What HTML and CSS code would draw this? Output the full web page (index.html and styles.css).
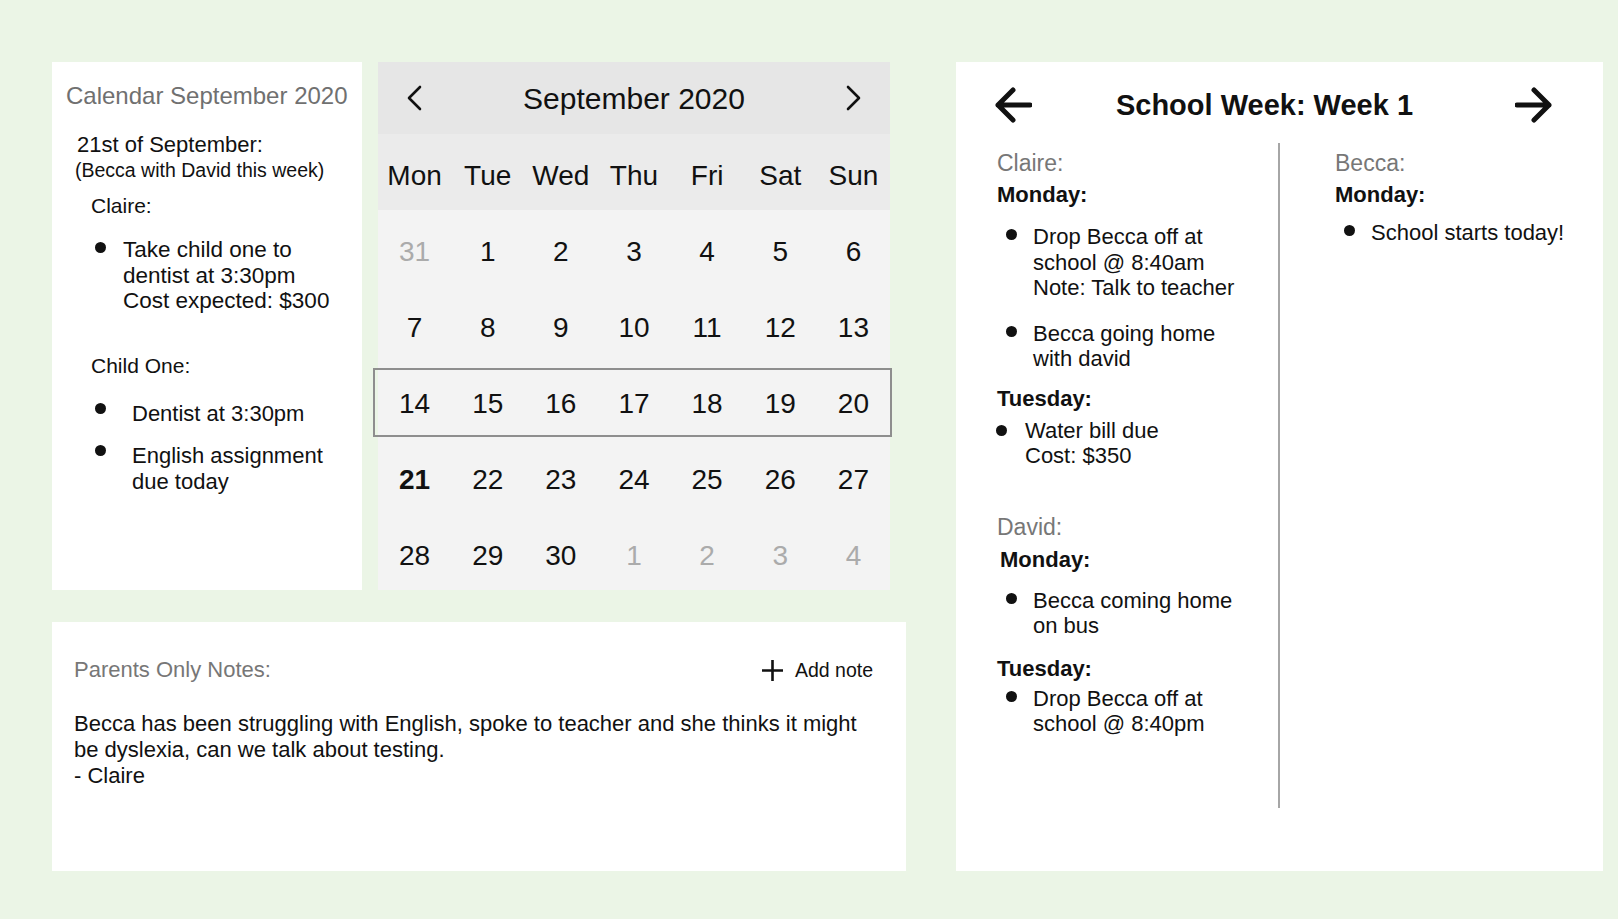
FILE: index.html
```html
<!DOCTYPE html>
<html lang="en">
<head>
    <meta charset="UTF-8">
    <meta name="viewport" content="width=device-width, initial-scale=1.0">
    <title>Family Calendar</title>
    <link rel="stylesheet" href="styles.css">
</head>
<body>
    <main class="page">
        <section class="left-col">
            <div class="top-row">
                <!-- Selected day summary -->
                <aside class="day-card">
                    <h1 class="day-title">Calendar September 2020</h1>
                    <h2 class="day-date">21st of September:</h2>
                    <p class="day-note">(Becca with David this week)</p>

                    <h3 class="person">Claire:</h3>
                    <ul class="dots">
                        <li>Take child one to<br>dentist at 3:30pm<br>Cost expected: $300</li>
                    </ul>

                    <h3 class="person person-gap">Child One:</h3>
                    <ul class="dots dots-wide">
                        <li>Dentist at 3:30pm</li>
                        <li>English assignment<br>due today</li>
                    </ul>
                </aside>

                <!-- Month view -->
                <div class="calendar">
                    <div class="cal-head">
                        <span class="cal-nav">
                            <svg width="16" height="26" viewBox="0 0 16 26"><polyline points="13,2 2,13 13,24" fill="none" stroke="#111" stroke-width="2.6" stroke-linecap="round" stroke-linejoin="round"/></svg>
                        </span>
                        <span class="cal-month">September 2020</span>
                        <span class="cal-nav">
                            <svg width="16" height="26" viewBox="0 0 16 26"><polyline points="3,2 14,13 3,24" fill="none" stroke="#111" stroke-width="2.6" stroke-linecap="round" stroke-linejoin="round"/></svg>
                        </span>
                    </div>
                    <div class="cal-days">
                        <span>Mon</span><span>Tue</span><span>Wed</span><span>Thu</span><span>Fri</span><span>Sat</span><span>Sun</span>
                    </div>
                    <div class="cal-week">
                        <span class="muted">31</span><span>1</span><span>2</span><span>3</span><span>4</span><span>5</span><span>6</span>
                    </div>
                    <div class="cal-week">
                        <span>7</span><span>8</span><span>9</span><span>10</span><span>11</span><span>12</span><span>13</span>
                    </div>
                    <div class="cal-week current">
                        <span>14</span><span>15</span><span>16</span><span>17</span><span>18</span><span>19</span><span>20</span>
                    </div>
                    <div class="cal-week">
                        <span class="today">21</span><span>22</span><span>23</span><span>24</span><span>25</span><span>26</span><span>27</span>
                    </div>
                    <div class="cal-week">
                        <span>28</span><span>29</span><span>30</span><span class="muted">1</span><span class="muted">2</span><span class="muted">3</span><span class="muted">4</span>
                    </div>
                </div>
            </div>

            <!-- Notes -->
            <section class="notes-card">
                <div class="notes-head">
                    <span class="notes-label">Parents Only Notes:</span>
                    <span class="add-note">
                        <svg width="23" height="23" viewBox="0 0 23 23"><path d="M11.5 1v21M1 11.5h21" stroke="#111" stroke-width="2.6"/></svg>
                        Add note
                    </span>
                </div>
                <p class="notes-body">Becca has been struggling with English, spoke to teacher and she thinks it might be dyslexia, can we talk about testing.<br>- Claire</p>
            </section>
        </section>

        <!-- Week view -->
        <section class="week-card">
            <div class="week-head">
                <svg width="38" height="38" viewBox="0 0 38 38"><path d="M36 19H4M19 4L4 19l15 15" fill="none" stroke="#111" stroke-width="5" stroke-linecap="round" stroke-linejoin="round"/></svg>
                <h2 class="week-title">School Week: Week 1</h2>
                <svg width="38" height="38" viewBox="0 0 38 38"><path d="M2 19h32M19 4l15 15-15 15" fill="none" stroke="#111" stroke-width="5" stroke-linecap="round" stroke-linejoin="round"/></svg>
            </div>

            <div class="week-cols">
                <div class="week-col col-left">
                    <h3 class="who">Claire:</h3>
                    <h4 class="day">Monday:</h4>
                    <ul class="tasks">
                        <li>Drop Becca off at<br>school @ 8:40am<br>Note: Talk to teacher</li>
                        <li>Becca going home<br>with david</li>
                    </ul>
                    <h4 class="day day-tue">Tuesday:</h4>
                    <ul class="tasks tasks-tight">
                        <li>Water bill due<br>Cost: $350</li>
                    </ul>

                    <h3 class="who who-gap">David:</h3>
                    <h4 class="day day-shift">Monday:</h4>
                    <ul class="tasks tasks-david">
                        <li>Becca coming home<br>on bus</li>
                    </ul>
                    <h4 class="day day-tue2">Tuesday:</h4>
                    <ul class="tasks tasks-last">
                        <li>Drop Becca off at<br>school @ 8:40pm</li>
                    </ul>
                </div>

                <div class="week-col col-right">
                    <h3 class="who">Becca:</h3>
                    <h4 class="day">Monday:</h4>
                    <ul class="tasks tasks-becca">
                        <li>School starts today!</li>
                    </ul>
                </div>
            </div>
        </section>
    </main>
</body>
</html>
```

FILE: styles.css
```css
/* Main Styles */
body {
    margin: 0;
    background-color: #ebf5e6;
    color: #111;
    font-family: "Liberation Sans", Arial, Helvetica, sans-serif;
}
h1, h2, h3, h4, p, ul {
    margin: 0;
    font-weight: normal;
}
.page {
    display: flex;
    align-items: flex-start;
    gap: 50px;
    padding: 62px 0 0 52px;
}
.left-col {
    display: flex;
    flex-direction: column;
    gap: 32px;
    width: 854px;
}
.top-row {
    display: flex;
    gap: 16px;
}

/* Day card */
.day-card {
    width: 310px;
    height: 528px;
    box-sizing: border-box;
    padding-top: 20px;
    background-color: #fff;
}
.day-title {
    margin-left: 14px;
    font-size: 24px;
    line-height: 28px;
    color: #707070;
}
.day-date {
    margin: 22px 0 0 25px;
    font-size: 22px;
    line-height: 26px;
}
.day-note {
    margin-left: 23px;
    font-size: 19.5px;
    line-height: 24px;
}
.person {
    margin: 11px 0 0 39px;
    font-size: 21px;
    line-height: 26px;
}
.person-gap {
    margin-top: 39px;
}
.dots {
    list-style: none;
    margin-top: 18px;
    padding-left: 71px;
    font-size: 22.5px;
    line-height: 25.5px;
}
.dots li {
    position: relative;
}
.dots li::before {
    content: "";
    position: absolute;
    left: -28px;
    top: 5px;
    width: 11px;
    height: 11px;
    border-radius: 50%;
    background-color: #111;
}
.dots-wide {
    margin-top: 22px;
    padding-left: 80px;
    font-size: 22px;
}
.dots-wide li::before {
    left: -37px;
    top: 2px;
}
.dots-wide li + li {
    margin-top: 17px;
}

/* Calendar */
.calendar {
    width: 512px;
    height: 528px;
    background-color: #f3f3f3;
}
.cal-head, .cal-days, .cal-week {
    display: grid;
    grid-template-columns: repeat(7, 1fr);
    align-items: center;
    text-align: center;
}
.cal-head {
    height: 72px;
    background-color: #e6e6e6;
}
.cal-nav {
    display: flex;
    justify-content: center;
}
.cal-month {
    grid-column: 2 / 7;
    padding-top: 1px;
    font-size: 30px;
}
.cal-days, .cal-week {
    height: 76px;
    box-sizing: border-box;
    padding-top: 7px;
    font-size: 28px;
}
.cal-days {
    background-color: #ebebeb;
}
.cal-week.current {
    position: relative;
}
.cal-week.current::after {
    content: "";
    position: absolute;
    top: 6px;
    bottom: 1px;
    left: -5px;
    right: -2px;
    border: 2px solid #8e8e8e;
}
.muted {
    color: #ababab;
}
.today {
    font-weight: bold;
}

/* Notes */
.notes-card {
    height: 249px;
    box-sizing: border-box;
    padding: 35px 33px 0 22px;
    background-color: #fff;
}
.notes-head {
    display: flex;
    justify-content: space-between;
    align-items: center;
    height: 26px;
}
.notes-label {
    font-size: 22px;
    color: #777;
}
.add-note {
    display: flex;
    align-items: center;
    gap: 11px;
    font-size: 19.5px;
}
.notes-body {
    max-width: 800px;
    margin-top: 28px;
    font-size: 22px;
    line-height: 26px;
}

/* Week card */
.week-card {
    width: 647px;
    height: 809px;
    box-sizing: border-box;
    padding-top: 24px;
    background-color: #fff;
}
.week-head {
    display: flex;
    align-items: center;
    height: 38px;
    padding: 0 50px 0 38px;
}
.week-title {
    flex: 1;
    margin-right: 18px;
    text-align: center;
    font-size: 29px;
    font-weight: bold;
}
.week-cols {
    display: flex;
    height: 665px;
    margin-top: 19px;
}
.col-left {
    width: 322px;
    box-sizing: border-box;
    padding-left: 41px;
}
.col-right {
    flex: 1;
    padding-left: 55px;
    border-left: 2px solid #a6a6a6;
}
.who {
    margin-top: 6px;
    font-size: 23px;
    line-height: 28px;
    color: #777;
}
.who-gap {
    margin-top: 44px;
}
.day {
    margin-top: 5px;
    font-size: 22px;
    line-height: 26px;
    font-weight: bold;
}
.day-shift {
    margin-top: 6px;
    padding-left: 3px;
}
.day-tue {
    margin-top: 14px;
}
.day-tue2 {
    margin-top: 17px;
}
.tasks {
    list-style: none;
    margin-top: 16px;
    padding-left: 36px;
    font-size: 22px;
    line-height: 25.5px;
}
.tasks li {
    position: relative;
}
.tasks li::before {
    content: "";
    position: absolute;
    left: -27px;
    top: 5px;
    width: 11px;
    height: 11px;
    border-radius: 50%;
    background-color: #111;
}
.tasks li + li {
    margin-top: 20px;
}
.tasks-tight {
    margin-top: 6px;
    padding-left: 28px;
}
.tasks-tight li::before {
    left: -29px;
    top: 7px;
}
.tasks-david {
    margin-top: 15px;
}
.tasks-last {
    margin-top: 4px;
}
.tasks-becca {
    margin-top: 12px;
}
```
